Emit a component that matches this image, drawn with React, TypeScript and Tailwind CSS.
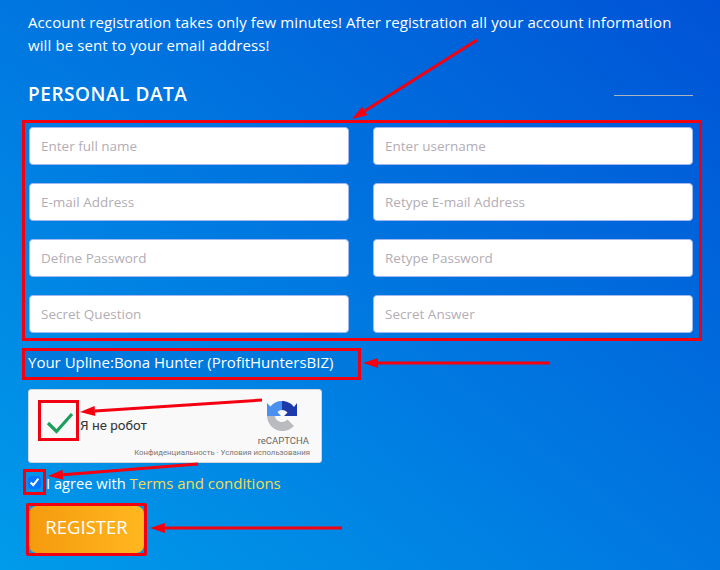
import React from "react";

const fields = [
  "Enter full name",
  "Enter username",
  "E-mail Address",
  "Retype E-mail Address",
  "Define Password",
  "Retype Password",
  "Secret Question",
  "Secret Answer",
];

function Arrow({ x1, y1, x2, y2 }: { x1: number; y1: number; x2: number; y2: number }) {
  const a = Math.atan2(y2 - y1, x2 - x1);
  const len = 15;
  const w = 5;
  const bx = x2 - Math.cos(a) * len;
  const by = y2 - Math.sin(a) * len;
  const px = -Math.sin(a) * w;
  const py = Math.cos(a) * w;
  return (
    <g>
      <line x1={x1} y1={y1} x2={bx} y2={by} stroke="#f40010" strokeWidth="3" />
      <polygon points={`${x2},${y2} ${bx + px},${by + py} ${bx - px},${by - py}`} fill="#f40010" />
    </g>
  );
}

export default function App() {
  return (
    <div className="relative w-[720px] h-[570px] overflow-hidden bg-[linear-gradient(to_top_right,#009bea,#0053d6)] text-white font-['Open_Sans','Noto_Sans',sans-serif]">
      <div className="pt-[11px] pl-7 pr-6 text-[15px] leading-[23px] tracking-[0.1px] whitespace-nowrap">
        <p>Account registration takes only few minutes! After registration all your account information</p>
        <p>will be sent to your email address!</p>
      </div>

      <div className="flex items-center justify-between pl-7 pr-[27px] mt-[25px] h-[24px]">
        <h2 className="text-[19px] font-semibold leading-[24px] tracking-[0.55px]">PERSONAL DATA</h2>
        <div className="w-[79px] h-px bg-[#a9b4bf] mt-[2px]" />
      </div>

      <div className="ml-[22px] mt-[14px] w-[680px] h-[221px] border-[3px] border-[#f00010] pl-[4px] pr-[6px] pt-[4px] grid grid-cols-2 gap-x-6 gap-y-[18px] content-start">
        {fields.map((f) => (
          <input
            key={f}
            placeholder={f}
            readOnly
            className="h-[38px] w-[320px] rounded-[4px] bg-white px-[11px] text-[13.5px] text-gray-700 outline-none border border-[#a3b8ee] placeholder:text-[#b3adb5]"
          />
        ))}
      </div>

      <div className="ml-[22px] mt-[7px] w-[339px] h-[32px] border-[3px] border-[#f00010] bg-[#0078dc] pl-[3px] pb-[3px] flex items-center text-[15px] whitespace-nowrap">
        Your Upline:Bona Hunter (ProfitHuntersBIZ)
      </div>

      <div className="ml-7 mt-[9px] relative w-[294px] h-[74px] rounded-[3px] bg-[#f9f9f9] border border-[#d6d6d6] font-['Roboto',sans-serif] text-[#333]">
        <div className="flex items-center pl-[9px] pt-[10px]">
          <div className="w-[41px] h-[41px] border-[3px] border-[#f00010] flex items-center justify-center shrink-0">
            <svg className="mt-[4px] ml-[2px]" width="28" height="24" viewBox="0 0 28 24" fill="none">
              <path d="M2 12 L10.5 20.5 L26 3" stroke="#1c9e5c" strokeWidth="3.2" />
            </svg>
          </div>
          <span className="text-[13.5px] ml-[1px] mt-[9px]">Я не робот</span>
        </div>
        <div className="absolute right-[24px] top-[10px] w-[30px] h-[31px]">
          <svg width="30" height="31" viewBox="0 0 30 31">
            <path d="M0 16 V3 L3.5 6.5 C6 3 10 1 15 1 L15 10 C13 10 11.5 11 10.5 12 L14 16 Z" fill="#4a90f0" />
            <path d="M15 1 C20 1 24.5 3.5 27 7 L30 3 V16 H17 L20.5 12.5 C19 11 17.5 10 15 10 Z" fill="#1c3aa9" />
            <path d="M0 16 H8 C8.5 19.5 11 22 15 22 C17.5 22 19 21 20.5 19.5 L27 26 C24 29 20 31 15 31 C7 31 0.5 24.5 0 16 Z" fill="#b9bbbe" />
          </svg>
        </div>
        <div className="absolute right-[12px] top-[45px] text-[9.5px] leading-[12px] text-[#666]">reCAPTCHA</div>
        <div className="absolute right-[11px] top-[57px] text-[7.8px] leading-[11px] text-[#777] whitespace-nowrap">
          Конфиденциальность · Условия использования
        </div>
      </div>

      <div className="ml-[23px] mt-[6px] flex items-center h-[26px] text-[14.7px] whitespace-nowrap">
        <div className="w-[23px] h-[26px] border-[3px] border-[#f00010] flex items-center justify-center shrink-0">
          <input type="checkbox" defaultChecked className="w-[13px] h-[13px] m-0" />
        </div>
        <span className="font-medium mt-[3px]">
          I agree with <a className="text-[#f6dc52] font-normal text-[15px]">Terms and conditions</a>
        </span>
      </div>

      <div className="ml-[26px] mt-[8px] w-[121px] h-[53px] border-[3px] border-[#f00010] rounded-[2px]">
        <button className="w-full h-full rounded-[8px] bg-[linear-gradient(to_right,#f59a0e,#ffb71f)] text-[18.5px] pb-[5px] text-white">
          REGISTER
        </button>
      </div>

      <svg className="absolute inset-0 pointer-events-none" width="720" height="570" viewBox="0 0 720 570">
        <Arrow x1={477} y1={40} x2={352} y2={119} />
        <Arrow x1={550} y1={363} x2={363} y2={363} />
        <Arrow x1={262} y1={400} x2={80} y2={412} />
        <Arrow x1={198} y1={464} x2={48} y2={476} />
        <Arrow x1={342} y1={528} x2={150} y2={528} />
      </svg>
    </div>
  );
}
